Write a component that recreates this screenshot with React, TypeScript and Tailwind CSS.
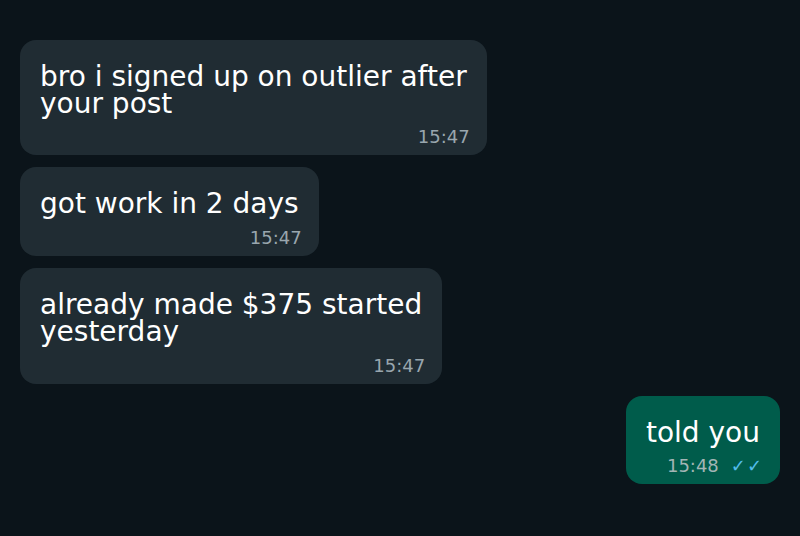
import React from 'react';

interface Message {
  lines: string[];
  time: string;
  outgoing?: boolean;
}

const messages: Message[] = [
  { lines: ['bro i signed up on outlier after', 'your post'], time: '15:47' },
  { lines: ['got work in 2 days'], time: '15:47' },
  { lines: ['already made $375 started', 'yesterday'], time: '15:47' },
  { lines: ['told you'], time: '15:48', outgoing: true },
];

const Bubble: React.FC<{ msg: Message }> = ({ msg }) => {
  return (
    <div
      className={`w-fit rounded-2xl px-5 pt-[24px] pb-[8px] ${
        msg.outgoing ? 'self-end bg-[#005c4b]' : 'self-start bg-[#202c33]'
      }`}
    >
      <div className="text-[28px] leading-[26.6px] text-white whitespace-nowrap">
        {msg.lines.map((line, i) => (
          <div key={i}>{line}</div>
        ))}
      </div>
      <div className="mt-[10.2px] -mr-[3px] flex justify-end items-center gap-3 text-[18px] leading-[20px]">
        <span className={msg.outgoing ? 'text-[#a3b5b5]' : 'text-[#99a6ae]'}>{msg.time}</span>
        {msg.outgoing && <span className="text-[#53bdeb] tracking-[1px]">✓✓</span>}
      </div>
    </div>
  );
};

export default function App() {
  return (
    <div className="w-[800px] h-[536px] bg-[#0b141a] font-['DejaVu_Sans',sans-serif] flex flex-col gap-3 px-5 pt-10">
      {messages.map((m, i) => (
        <Bubble key={i} msg={m} />
      ))}
    </div>
  );
}
